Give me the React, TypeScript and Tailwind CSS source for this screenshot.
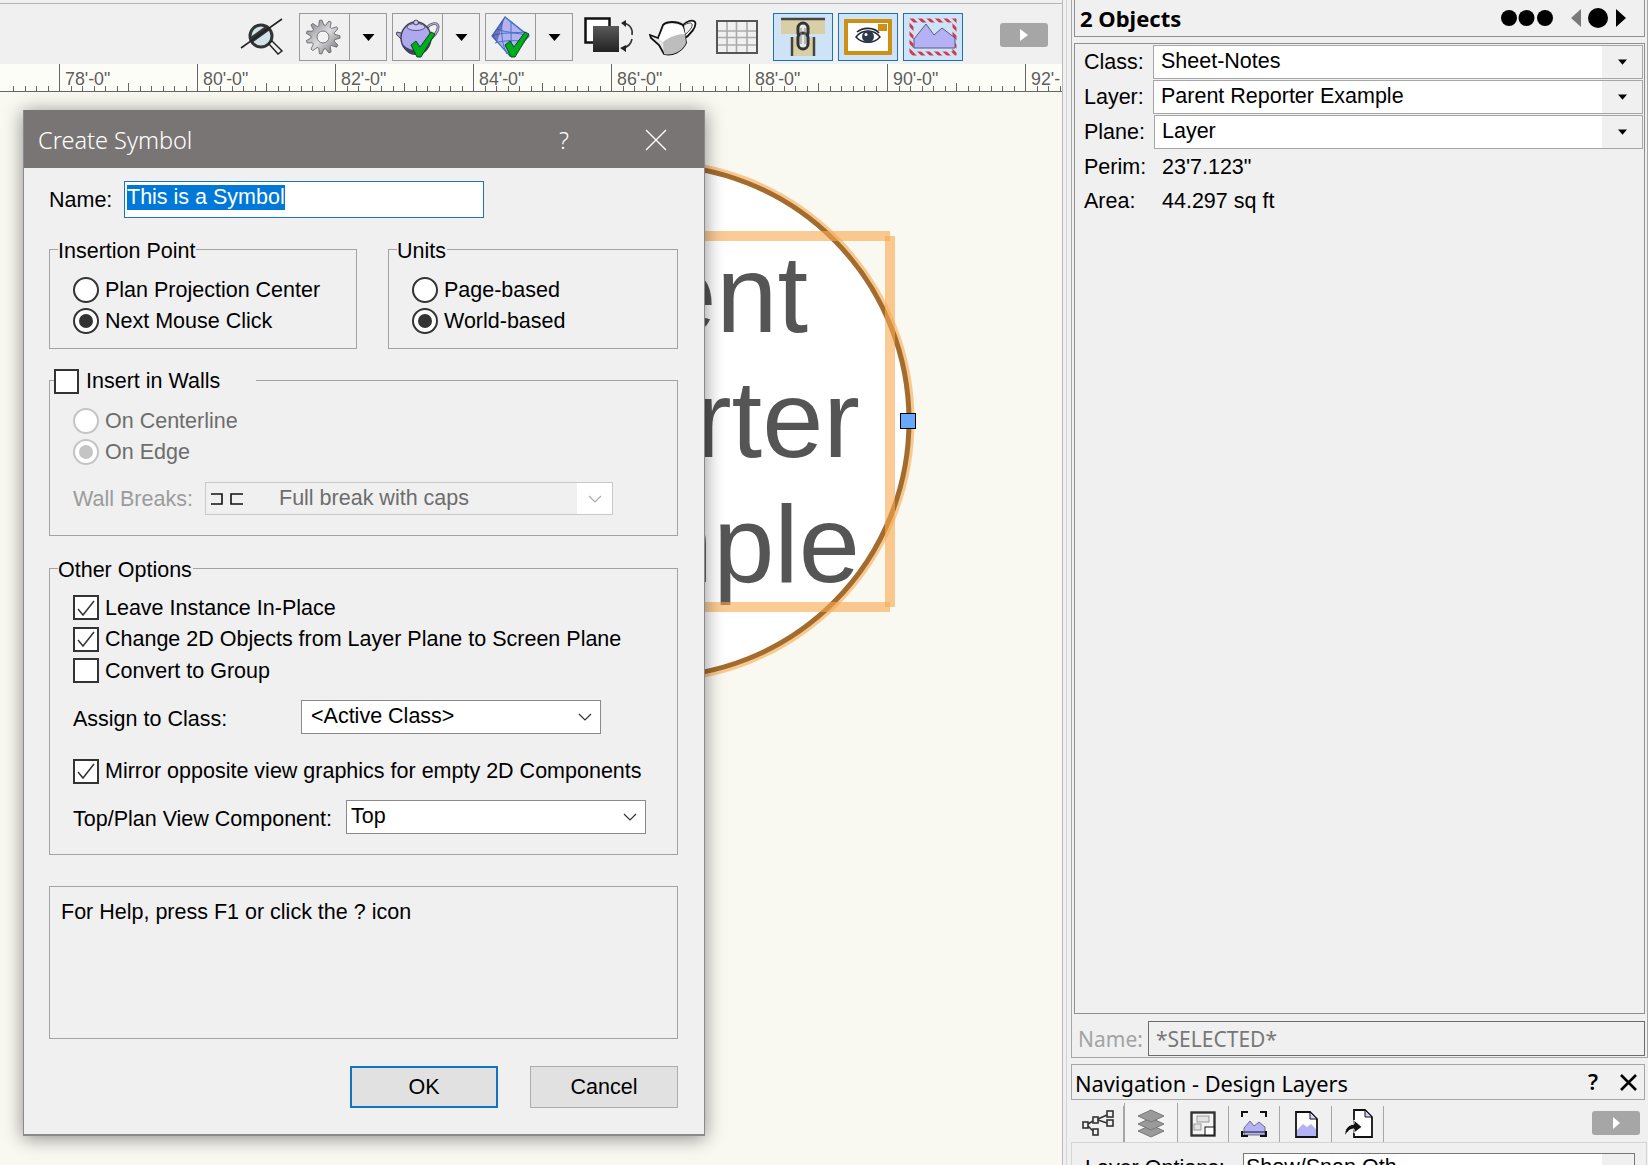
import type { ReactNode } from "react"

const sans = "font-['Liberation_Sans',Arial,sans-serif]"
const ui = "font-['Noto_Sans','Open_Sans',sans-serif]"

function Chevron({ color = "#333" }: { color?: string }) {
  return (
    <svg width="14" height="8" viewBox="0 0 14 8" fill="none" stroke={color} strokeWidth="1.2">
      <path d="M1 1l6 6 6-6" />
    </svg>
  )
}

function Caret({ w = 12, h = 7 }: { w?: number; h?: number }) {
  return (
    <svg width={w} height={h} viewBox="0 0 12 7">
      <path d="M0 0h12L6 7z" fill="#000" />
    </svg>
  )
}

function Radio({ label, on, disabled }: { label: string; on?: boolean; disabled?: boolean }) {
  return (
    <div className="flex h-[31px] items-center gap-[6px]">
      <span
        className={`flex h-[26px] w-[26px] items-center justify-center rounded-full border-2 bg-white ${disabled ? "border-[#c4c4c4]" : "border-[#333333]"}`}
      >
        {on && <span className={`h-[14px] w-[14px] rounded-full ${disabled ? "bg-[#c4c4c4]" : "bg-[#333333]"}`} />}
      </span>
      <span className={disabled ? "text-[#6d6d6d]" : ""}>{label}</span>
    </div>
  )
}

function Check({ label, on }: { label: string; on?: boolean }) {
  return (
    <div className="flex h-[31.5px] items-center gap-[6px]">
      <span className="flex h-[25px] w-[26px] items-center justify-center border-2 border-[#333333] bg-white">
        {on && (
          <svg width="20" height="18" viewBox="0 0 20 18" fill="none" stroke="#333" strokeWidth="1.5">
            <path d="M2 10l5 6L18 2" />
          </svg>
        )}
      </span>
      <span>{label}</span>
    </div>
  )
}

function Group({ title, className, children }: { title: string; className: string; children: ReactNode }) {
  return (
    <div className={`relative border border-[#a3a3a3] ${className}`}>
      <span className="absolute left-[8px] top-[-12px] bg-[#f0f0f0] pr-[1px] leading-[26px]">{title}</span>
      {children}
    </div>
  )
}

function DialogSelect({ value, className }: { value: string; className: string }) {
  return (
    <div className={`flex items-center justify-between border border-[#8a8a8a] bg-white pr-[8px] ${className}`}>
      <span className="relative top-[-1px]">{value}</span>
      <Chevron />
    </div>
  )
}

function Gear() {
  const pts: string[] = []
  const n = 11
  for (let i = 0; i < n * 4; i++) {
    const r = i % 4 < 2 ? 17 : 12
    const a = ((i - 0.5) / (n * 4)) * Math.PI * 2
    pts.push(`${(18 + r * Math.cos(a)).toFixed(1)},${(18 + r * Math.sin(a)).toFixed(1)}`)
  }
  return (
    <svg width="36" height="36" viewBox="0 0 36 36" className="mr-[3px]">
      <defs>
        <linearGradient id="gear" x1="0" y1="0" x2="1" y2="1">
          <stop offset="0" stopColor="#77777f" />
          <stop offset="0.5" stopColor="#dcdcdf" />
          <stop offset="1" stopColor="#66666d" />
        </linearGradient>
      </defs>
      <polygon points={pts.join(" ")} fill="url(#gear)" stroke="#5d5d5d" strokeWidth="0.8" />
      <circle cx="18" cy="18" r="6" fill="#f2f2f2" stroke="#777" />
    </svg>
  )
}

function GreenCheck({ x, y }: { x: number; y: number }) {
  return (
    <path
      transform={`translate(${x} ${y})`}
      d="M0 13l5-4 4 6L20 0l4 2L10 25H6z"
      fill="#00ad1f"
      stroke="#063d14"
      strokeWidth="0.9"
    />
  )
}

function BlueTeapot() {
  return (
    <svg width="44" height="44" viewBox="0 0 44 44">
      <path d="M30 14c4-6 11-7 12-3 1 5-5 12-10 14" fill="none" stroke="#555" strokeWidth="2.8" />
      <path d="M30 14c4-6 11-7 12-3 1 5-5 12-10 14" fill="none" stroke="#b9b2ee" strokeWidth="1.2" />
      <path d="M9 19L1 17l-1 2 6 6 4 9z" fill="#a9a2e6" stroke="#444" />
      <ellipse cx="20" cy="23" rx="15" ry="16" fill="#b0a8ee" stroke="#3d3d50" strokeWidth="1.4" />
      <path d="M7 29c6 8 20 8 27 0-2 8-8 11-14 11s-11-3-13-11z" fill="#43435c" />
      <ellipse cx="20" cy="12" rx="9" ry="3.5" fill="#c9c3f7" stroke="#55557a" />
      <circle cx="20" cy="7.500" r="2.4" fill="#c9c3f7" stroke="#444" />
      <GreenCheck x={15} y={17} />
    </svg>
  )
}

function BlueBox() {
  return (
    <svg width="44" height="44" viewBox="0 0 44 44">
      <path d="M16 2L3 21l18 20 19-20z" fill="#b5b1ef" stroke="#3e74c9" strokeWidth="1.3" />
      <path d="M3 21c10-4 25-4 37 0M8 14c10 4 20 4 28 3M6 28c10-3 22-3 30-1M13 6c-1 12 0 24 5 33M22 6c0 12 0 24 1 34M16 2l23 19" fill="none" stroke="#3e74c9" />
      <path d="M16 2L3 21l5 6 8-25z" fill="#39408a" opacity="0.55" />
      <GreenCheck x={16} y={17} />
    </svg>
  )
}

function Magnifier() {
  return (
    <svg width="44" height="38" viewBox="0 0 44 38">
      <circle cx="21" cy="18" r="11" fill="#cfe4ea" stroke="#333" strokeWidth="3" />
      <path d="M12 25l18-13-3-5-18 13z" fill="#333" />
      <path d="M29 26l9 10 4-3-10-10z" fill="#eee" stroke="#222" strokeWidth="1.4" />
      <path d="M1 30L42 1" stroke="#222" strokeWidth="1.6" />
    </svg>
  )
}

function Swap() {
  return (
    <svg width="52" height="40" viewBox="0 0 52 40">
      <defs>
        <linearGradient id="dk" x1="0" y1="0" x2="0" y2="1">
          <stop offset="0" stopColor="#5a5a5a" />
          <stop offset="1" stopColor="#222" />
        </linearGradient>
      </defs>
      <rect x="1.5" y="1.5" width="24" height="24" fill="#fff" stroke="#111" strokeWidth="2.5" />
      <rect x="9" y="9" width="26" height="26" fill="url(#dk)" />
      <path d="M39 6c7 1 10 6 9 12M48 22c-1 5-4 8-9 9" fill="none" stroke="#333" strokeWidth="1.6" />
      <path d="M37 6l5-3v7zM36 31l6-3v7z" fill="#222" />
    </svg>
  )
}

function GreyTeapot() {
  return (
    <svg width="48" height="38" viewBox="0 0 48 38">
      <path d="M33 8c4-5 11-7 13-4 2 4-4 13-13 18" fill="#fff" stroke="#111" strokeWidth="1.8" />
      <path d="M33 9c4-4 9-5 10-3 1 3-3 8-9 12" fill="#f0f0f0" stroke="#444" />
      <path d="M9 20L1 17l1 3 8 7 5 9c8 2 18-2 22-11L34 7C28 3 18 3 14 7z" fill="#e6e6e6" stroke="#111" strokeWidth="1.8" />
      <path d="M14 24c5-6 16-9 22-8l1 9c-4 9-14 13-22 11z" fill="#bdbdbd" />
      <path d="M16 7c6-2 14-1 18 2l2 7c-8 0-16 3-22 8l-4-4z" fill="#fff" />
    </svg>
  )
}

function GridIcon() {
  return (
    <svg width="42" height="34" viewBox="0 0 42 34" fill="none">
      <path d="M11 1v32M20.500 1v32M31 1v32M1 11h40M1 17.500h40M1 25h40" stroke="#aaa" strokeWidth="1.6" />
      <rect x="1" y="1" width="40" height="32" stroke="#555" strokeWidth="2" />
    </svg>
  )
}

function LinkIcon() {
  return (
    <svg width="46" height="40" viewBox="0 0 46 40">
      <rect x="1" y="2" width="44" height="15" fill="#d9cfa6" />
      <path d="M1 2h44" stroke="#444" strokeWidth="2.5" />
      <rect x="12" y="20" width="22" height="19" fill="#d9cfa6" />
      <path d="M12 20v19M34 20v19" stroke="#444" strokeWidth="2.5" />
      <rect x="18" y="6" width="10" height="15" rx="5" fill="#e8e8e8" stroke="#333" strokeWidth="3" />
      <rect x="18" y="16" width="10" height="16" rx="5" fill="#e8e8e8" stroke="#333" strokeWidth="3" />
      <path d="M21 11v16M25 11v16" stroke="#888" strokeWidth="1" />
    </svg>
  )
}

function EyeIcon() {
  return (
    <svg width="48" height="36" viewBox="0 0 48 36">
      <rect width="48" height="36" rx="1" fill="#cd8f14" />
      <rect x="4" y="4" width="40" height="28" fill="#fff" />
      <rect x="34" y="5" width="9" height="7" fill="#cd8f14" />
      <path d="M12 18c6-8 18-8 24 0-6 7-18 7-24 0z" fill="#fff" stroke="#223" strokeWidth="1.4" />
      <circle cx="24" cy="17.500" r="6" fill="#2d3a4a" />
      <circle cx="22" cy="15.500" r="1.500" fill="#fff" />
      <path d="M13 13c6-5 17-5 22 1" fill="none" stroke="#223" strokeWidth="1.6" />
    </svg>
  )
}

function LayerIcon() {
  return (
    <svg width="48" height="38" viewBox="0 0 48 38">
      <defs>
        <pattern id="hatch" width="6" height="6" patternUnits="userSpaceOnUse" patternTransform="rotate(-45)">
          <rect width="3" height="6" fill="#d2384f" />
        </pattern>
      </defs>
      <rect x="2.500" y="2.500" width="43" height="33" fill="none" stroke="url(#hatch)" strokeWidth="4" />
      <path d="M5 30V21L17 6l8 11 8-7 13 10v10z" fill="#b5b1f5" />
      <path d="M5 30V21L17 6l8 11 8-7 13 10v10z" fill="none" stroke="#565a80" strokeWidth="1" />
    </svg>
  )
}

function ToolGroup({ children }: { children: ReactNode }) {
  return (
    <div className="flex h-[48px] w-[88px] border border-[#999999] bg-[#f0f0f0]">
      <div className="flex w-[50px] items-center justify-center border-r border-[#999999]">{children}</div>
      <div className="flex flex-1 items-center justify-center">
        <Caret w={13} h={7} />
      </div>
    </div>
  )
}

function ToolOn({ children }: { children: ReactNode }) {
  return (
    <div className="flex h-[48px] w-[60px] items-center justify-center border border-[#1c74b8] bg-[#cfe3f6]">
      {children}
    </div>
  )
}

function Ruler() {
  const ticks = []
  // first major tick sits left of the window, 138px per 2 feet
  for (let i = -4; i < 100; i++) {
    const x = Math.round(59 + i * 11.5) + 0.5
    const m = ((i % 12) + 12) % 12
    const y = m === 0 ? 0 : m === 6 ? 19 : 22
    ticks.push(<path key={i} d={`M${x} ${y}V27`} stroke="#666" strokeWidth="1" />)
  }
  return (
    <svg width="1062" height="28" className="block">
      <path d="M0 27.500H1062" stroke="#666" />
      {ticks}
    </svg>
  )
}

function RulerLabels() {
  const labels = ["78'-0\"", "80'-0\"", "82'-0\"", "84'-0\"", "86'-0\"", "88'-0\"", "90'-0\"", "92'-"]
  return (
    <div className={`absolute left-[65px] top-[5px] flex text-[17.8px] leading-[20px] text-[#5d5d5d] ${sans}`}>
      {labels.map((l) => (
        <span key={l} className="w-[138px]">
          {l}
        </span>
      ))}
    </div>
  )
}

function InspectorRow({ label, value, ml = "" }: { label: string; value: string; ml?: string }) {
  return (
    <div className="flex h-[35px] items-center">
      <span className="w-[78px] pl-[9px]">{label}</span>
      <div className={`flex h-[34px] flex-1 border border-[#a6a6a6] bg-white ${ml}`}>
        <span className="flex-1 pl-[7px] leading-[31px]">{value}</span>
        <span className="flex w-[40px] items-center justify-center bg-[#f0f0f0]">
          <Caret w={9} h={6} />
        </span>
      </div>
    </div>
  )
}

function TabIcon({ i }: { i: number }) {
  if (i === 0)
    return (
      <svg width="34" height="30" viewBox="0 0 34 30" fill="none" stroke="#333" strokeWidth="1.6">
        <rect x="1" y="13" width="5" height="6" />
        <rect x="11" y="8" width="5" height="6" />
        <rect x="11" y="20" width="5" height="6" />
        <rect x="25" y="2" width="6" height="6" />
        <rect x="25" y="11" width="6" height="6" />
        <path d="M6 15l5-3M6 17l5 5M16 10l9-4M16 11l9 3" />
      </svg>
    )
  if (i === 1)
    return (
      <svg width="30" height="30" viewBox="0 0 30 30" fill="#9a9a9a" stroke="#777">
        <path d="M15 17l13 6-13 6-13-6z" />
        <path d="M15 10l13 6-13 6-13-6z" />
        <path d="M15 2l13 6-13 6-13-6z" />
      </svg>
    )
  if (i === 2)
    return (
      <svg width="26" height="26" viewBox="0 0 26 26">
        <rect x="1.500" y="1.500" width="23" height="23" fill="#f4f4f4" stroke="#333" strokeWidth="2.4" />
        <rect x="7" y="5" width="12" height="6" fill="#e4e4e4" stroke="#999" />
        <rect x="4" y="13" width="7" height="6" fill="#e4e4e4" stroke="#999" />
        <rect x="15" y="16" width="9" height="8" fill="#fff" stroke="#111" />
      </svg>
    )
  if (i === 3)
    return (
      <svg width="26" height="26" viewBox="0 0 26 26">
        <path d="M3 17l6-7 4 5 5-4 6 5v8H3z" fill="#b5b1f5" stroke="#556" strokeWidth="0.8" />
        <path d="M1 6V1h6M19 1h6v5M1 20v5h6M19 25h6v-5" fill="none" stroke="#111" strokeWidth="2" />
        <path d="M1 21h24" stroke="#111" strokeWidth="1" />
      </svg>
    )
  if (i === 4)
    return (
      <svg width="24" height="27" viewBox="0 0 24 27">
        <path d="M2 1h14l7 7v18H2z" fill="#fff" stroke="#111" strokeWidth="1.8" />
        <path d="M3 19l6-6 4 3 4-3 5 5v7H3z" fill="#b5b1f5" />
        <path d="M16 1v7h7z" fill="#d6d6f5" stroke="#111" />
      </svg>
    )
  return (
    <svg width="30" height="30" viewBox="0 0 30 30">
      <path d="M11 1h11l7 7v20H11z" fill="#fff" stroke="#111" strokeWidth="1.8" />
      <path d="M22 1v7h7z" fill="#cfcff5" stroke="#111" />
      <path d="M2 27c-1-6 2-11 9-12v-4l8 7-8 6v-4c-4 0-7 3-9 7z" fill="#111" stroke="#fff" />
    </svg>
  )
}

export default function App() {
  const tabs = [0, 1, 2, 3, 4, 5]
  const tabW = [50, 54, 51, 51, 52, 52]
  return (
    <div className={`flex h-[1165px] w-[1648px] overflow-hidden bg-[#f0f0f0] text-[21.5px] leading-[26px] text-black ${sans}`}>
      {/* Drawing area */}
      <div className="flex w-[1062px] flex-col">
        <div className="h-[64px] bg-[#f0f0f0] pt-[3px]">
          <div className="h-px bg-[#b5b5b5]" />
          <div className="flex items-center pt-[9px]">
            <div className="ml-[240px] flex w-[59px]">
              <Magnifier />
            </div>
            <div className="flex gap-[5px]">
              <ToolGroup>
                <Gear />
              </ToolGroup>
              <ToolGroup>
                <BlueTeapot />
              </ToolGroup>
              <ToolGroup>
                <BlueBox />
              </ToolGroup>
            </div>
            <div className="ml-[11px] flex w-[65px]">
              <Swap />
            </div>
            <div className="flex w-[67px]">
              <GreyTeapot />
            </div>
            <div className="flex w-[57px]">
              <GridIcon />
            </div>
            <div className="flex gap-[5px]">
              <ToolOn>
                <LinkIcon />
              </ToolOn>
              <ToolOn>
                <EyeIcon />
              </ToolOn>
              <ToolOn>
                <LayerIcon />
              </ToolOn>
            </div>
            <div className="mb-[4px] ml-[37px] flex h-[24px] w-[48px] items-center justify-center rounded-[3px] bg-[#a6a6a6]">
              <svg width="8" height="12" viewBox="0 0 8 12">
                <path d="M0 0l8 6-8 6z" fill="#fff" />
              </svg>
            </div>
          </div>
        </div>
        <div className="relative h-[28px] bg-[#fdfdf8]">
          <Ruler />
          <RulerLabels />
        </div>

        {/* Canvas */}
        <div className="relative flex-1 bg-[#f9f8f1]">
          <svg width="1062" height="1073" className="absolute left-0 top-0">
            <circle cx="653" cy="329" r="259" fill="none" stroke="#f8c98f" strokeWidth="5" />
            <circle cx="653" cy="329" r="256" fill="#fff" stroke="#a36c2e" strokeWidth="5" />
          </svg>
          <div className="absolute left-[346px] top-[138.5px] w-[600px] text-center text-[110px] leading-[125px] text-[#555555]">
            <div>Parent</div>
            <div>Reporter</div>
            <div>Example</div>
          </div>
          <svg width="1062" height="1073" className="absolute left-0 top-0">
            <path d="M400 144h490M400 515h490" stroke="#f6a84e" strokeOpacity="0.6" strokeWidth="10" fill="none" />
            <path d="M890 144v371" stroke="#f6a84e" strokeOpacity="0.6" strokeWidth="10" fill="none" />
          </svg>
          <div className="absolute left-[900px] top-[321px] h-[16px] w-[16px] border border-black bg-[#66aaff]" />

          {/* Create Symbol dialog */}
          <div className="absolute left-[23px] top-[18px] w-[682px] border-x border-b-2 border-x-[#8a8a8a] border-b-[#8a8a8a] bg-[#f0f0f0] shadow-[0_2px_18px_rgba(0,0,0,0.45)]">
            <div className={`flex h-[58px] items-center bg-[#7a7575] pl-[14px] text-[23.5px] text-white ${ui}`}>
              <span className="relative top-[1px] w-[521px] font-light">Create Symbol</span>
              <span className="relative top-[1px] w-[20px] font-light">?</span>
              <svg width="22" height="22" viewBox="0 0 22 22" className="relative top-[1px] ml-[66px]" stroke="#fff" strokeWidth="1.4">
                <path d="M1 1l20 20M21 1L1 21" />
              </svg>
            </div>
            <div className="pl-[25px] pr-[26px] pt-[13px]">
              <div className="flex h-[37px]">
                <span className="w-[75px] pt-[6px]">Name:</span>
                <div className="h-[37px] w-[360px] border border-[#1c74b8] bg-white pl-[2px] pt-[2px]">
                  <span className="inline-block h-[25px] bg-[#0078d7] leading-[25px] text-white">This is a Symbol</span>
                </div>
              </div>

              <div className="mt-[31px] flex justify-between">
                <Group title="Insertion Point" className="h-[100px] w-[308px] pl-[23px] pt-[24px]">
                  <Radio label="Plan Projection Center" />
                  <Radio label="Next Mouse Click" on />
                </Group>
                <Group title="Units" className="h-[100px] w-[290px] pl-[23px] pt-[24px]">
                  <Radio label="Page-based" />
                  <Radio label="World-based" on />
                </Group>
              </div>

              <div className="relative mt-[31px] h-[156px] border border-[#a3a3a3] pl-[23px] pt-[24px]">
                <div className="absolute left-[4px] top-[-13px] flex h-[26px] w-[202px] items-center gap-[7px] bg-[#f0f0f0]">
                  <span className="h-[25px] w-[25px] border-2 border-[#333333] bg-white" />
                  <span>Insert in Walls</span>
                </div>
                <Radio label="On Centerline" disabled />
                <Radio label="On Edge" on disabled />
                <div className="mt-[15px] flex h-[33px] items-center">
                  <span className="w-[132px] text-[#9b9b9b]">Wall Breaks:</span>
                  <div className="flex h-[33px] w-[408px] border border-[#c9c9c9] text-[#6d6d6d]">
                    <span className="flex w-[73px] items-center gap-[8px] pl-[4px]">
                      <svg width="34" height="12" viewBox="0 0 34 12" fill="none" stroke="#111" strokeWidth="1.6">
                        <path d="M1 1h11v10H1M33 1H21v10h12" />
                      </svg>
                    </span>
                    <span className="flex-1 leading-[31px]">Full break with caps</span>
                    <span className="flex w-[35px] items-center justify-center bg-white">
                      <Chevron color="#aaa" />
                    </span>
                  </div>
                </div>
              </div>

              <Group title="Other Options" className="mt-[32px] h-[287px] pl-[23px] pt-[23px]">
                <Check label="Leave Instance In-Place" on />
                <Check label="Change 2D Objects from Layer Plane to Screen Plane" on />
                <Check label="Convert to Group" />
                <div className="mt-[13px] flex h-[34px] items-center">
                  <span className="w-[228px] pt-[5px]">Assign to Class:</span>
                  <DialogSelect value="<Active Class>" className="h-[34px] w-[300px] pl-[9px]" />
                </div>
                <div className="mt-[22px]">
                  <Check label="Mirror opposite view graphics for empty 2D Components" on />
                </div>
                <div className="mt-[13px] flex h-[34px] items-center">
                  <span className="w-[273px] pt-[4px]">Top/Plan View Component:</span>
                  <DialogSelect value="Top" className="h-[34px] w-[300px] pl-[4px]" />
                </div>
              </Group>

              <div className="mt-[31px] h-[153px] border border-[#a3a3a3] pl-[11px] pt-[12px]">For Help, press F1 or click the ? icon</div>

              <div className="mt-[27px] flex justify-end gap-[32px] pb-[26px]">
                <div className="flex h-[42px] w-[148px] items-center justify-center border-2 border-[#0f74c4] bg-[#e1e1e1]">OK</div>
                <div className="flex h-[42px] w-[148px] items-center justify-center border border-[#adadad] bg-[#e1e1e1]">Cancel</div>
              </div>
            </div>
          </div>
        </div>
      </div>

      {/* Right palettes */}
      <div className="w-[586px] border-l border-[#b9b9b9] pl-[3px]">
        <div className="flex h-full flex-col border-l border-[#d4d4d4] pl-[4px]">
          <div className="h-[1058px] shrink-0 border border-t-0 border-[#a6a6a6] px-[2px]">
            <div className={`flex h-[37px] items-center justify-between border-x border-b border-[#8f8f8f] pl-[5px] pr-[18px] text-[22px] font-bold ${ui}`}>
              <span>2 Objects</span>
              <svg width="125" height="22" viewBox="0 0 125 22">
                <circle cx="8" cy="11" r="8" />
                <circle cx="25.500" cy="11" r="8" />
                <circle cx="44" cy="11" r="8" />
                <path d="M80 2v18L70 11z" fill="#7a7a7a" />
                <circle cx="97" cy="11" r="10" />
                <path d="M115 2v18l10-9z" />
              </svg>
            </div>
            <div className="mt-[6px] flex h-[971px] flex-col border border-[#8f8f8f] pr-[1px]">
              <InspectorRow label="Class:" value="Sheet-Notes" />
              <InspectorRow label="Layer:" value="Parent Reporter Example" />
              <InspectorRow label="Plane:" value="Layer" ml="ml-[1px]" />
              <div className="flex h-[35px] items-center pl-[9px]">
                <span className="w-[78px]">Perim:</span>
                <span>23'7.123"</span>
              </div>
              <div className="flex h-[33px] items-center pl-[9px]">
                <span className="w-[78px]">Area:</span>
                <span>44.297 sq ft</span>
              </div>
            </div>
            <div className={`mt-[7px] flex h-[35px] items-center ${ui}`}>
              <span className="w-[74px] pl-[4px] text-[21px] text-[#a3a3a3]">Name:</span>
              <div className="h-[35px] flex-1 border border-[#6d6d6d] pl-[7px] text-[21px] leading-[34px] text-[#777777]">*SELECTED*</div>
            </div>
          </div>

          <div className={`mr-[3px] mt-[6px] flex h-[36px] shrink-0 items-center justify-between border border-[#a6a6a6] pl-[3px] pr-[7px] text-[21.8px] ${ui}`}>
            <span className="relative top-[2px]">Navigation - Design Layers</span>
            <span className="flex items-center gap-[22px]">
              <span className="font-semibold">?</span>
              <svg width="17" height="17" viewBox="0 0 17 17" stroke="#000" strokeWidth="2.6">
                <path d="M1 1l15 15M16 1L1 16" />
              </svg>
            </span>
          </div>

          <div className="mt-[3px] flex shrink-0 items-end pl-[3px]">
            {tabs.map((t, i) => (
              <div
                key={t}
                style={{ width: tabW[i] }}
                className={`flex items-center justify-center border-r border-[#a6a6a6] ${t === 1 ? "h-[39px] border-l bg-[#f3f3f3]" : "h-[36px]"}`}
              >
                <TabIcon i={t} />
              </div>
            ))}
            <div className="mb-[7px] ml-[208px] flex h-[24px] w-[48px] items-center justify-center rounded-[3px] bg-[#a6a6a6]">
              <svg width="7" height="12" viewBox="0 0 7 12">
                <path d="M0 0l7 6-7 6z" fill="#fff" />
              </svg>
            </div>
          </div>

          <div className="mr-[1px] flex h-[40px] shrink-0 border border-b-0 border-[#d4d4d4] pl-[13px] pt-[10px]">
            <span className="w-[158px] pt-[2px]">Layer Options:</span>
            <div className="flex h-[40px] w-[392px] border border-[#777777] bg-white pl-[2px]">
              <span className="flex-1">Show/Snap Oth</span>
              <span className="w-[32px] bg-[#f0f0f0]" />
            </div>
          </div>
        </div>
      </div>
    </div>
  )
}
